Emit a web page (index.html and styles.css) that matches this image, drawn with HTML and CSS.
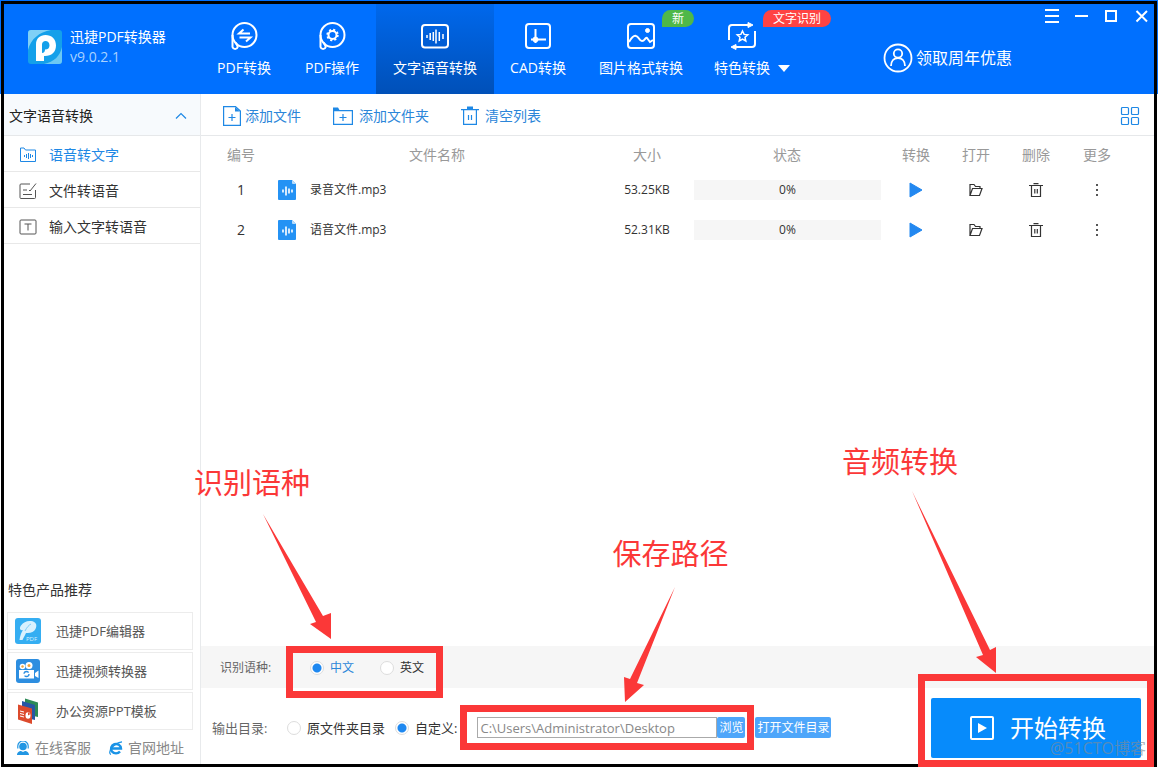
FILE: index.html
```html
<!DOCTYPE html>
<html lang="zh-CN">
<head>
<meta charset="utf-8">
<title>迅捷PDF转换器</title>
<link rel="stylesheet" href="styles.css">
</head>
<body>
<svg class="defs" aria-hidden="true">
  <symbol id="i-play" viewBox="0 0 14 16"><path d="M1 1l12 7-12 7z" fill="#2388f0" stroke="#2388f0" stroke-linejoin="round"/></symbol>
  <symbol id="i-open" viewBox="0 0 14 14"><path d="M1 12.500V1.500h4l1.500 2h4.500v2M1 12.500l2.500-7h9.500l-2.500 7z" fill="none" stroke="#333" stroke-width="1.200"/></symbol>
  <symbol id="i-trash" viewBox="0 0 14 14"><path d="M0 2.500h14M4.500 .6h5M2.500 2.500v11h9v-11M5.800 6v4.500M8.300 6v4.500" fill="none" stroke="#333" stroke-width="1.200"/></symbol>
  <symbol id="i-more" viewBox="0 0 4 14"><path d="M1 1h2v2H1zM1 6h2v2H1zM1 11h2v2H1z" fill="#555"/></symbol>
  <symbol id="i-audio" viewBox="0 0 18 20"><path d="M0 1q0-1 1-1h13l4 4v15q0 1-1 1H1q-1 0-1-1z" fill="#2492f4"/><path d="M14 0v3q0 1 1 1h3z" fill="#b9dcfb"/><path d="M5 9.500v3M8 6.500v9M11 8.500v5M14 9.500v3" stroke="#fff" stroke-width="1.600"/></symbol>
</svg>
<div class="page">
<div class="app">
  <header class="topbar">
    <div class="brand">
      <svg class="brand-logo" viewBox="0 0 34 34"><rect width="34" height="34" rx="3" fill="#14a0ea"/><path d="M0 20V3q0-3 3-3h20C11 2 3 9 0 20z" fill="#7fd0f6"/><path d="M34 17v14q0 3-3 3H16c10-2 16-8 18-17z" fill="#6cc8f3"/><path d="M8 31V14.500C8 8.500 12 5 17.500 5 23.500 5 28 9 28 15.500S23.500 26 17 26h-1v5z" fill="#fff"/><path d="M14 23v-8.500c0-2 1.500-3.500 3.500-3.500s4 1.500 4 4.200-1.500 4.300-4.500 4.300c0 2-1 3.500-3 3.500z" fill="#14a0ea"/></svg>
      <div class="brand-text"><div>迅捷PDF转换器</div><div class="version">v9.0.2.1</div></div>
    </div>
    <nav class="tabs">
      <a class="tab" href="#"><svg class="tab-icon" viewBox="0 0 28 28"><circle cx="14.500" cy="13" r="12"/><path d="M2.500 13v12a2.700 2.700 0 0 0 5.200 0c0-1.500-1-2.500-2-4.500"/><path d="M20 11.500H9l4.500-4M9.500 15.500h11L16 19.500"/></svg>PDF转换</a>
      <a class="tab" href="#"><svg class="tab-icon" viewBox="0 0 28 28"><circle cx="14.500" cy="13" r="12"/><path d="M2.500 13v12a2.700 2.700 0 0 0 5.200 0c0-1.500-1-2.500-2-4.500"/><circle cx="14.500" cy="13" r="4"/><circle class="teeth" cx="14.500" cy="13" r="5.300"/></svg>PDF操作</a>
      <a class="tab tab-wide tab-active" href="#"><svg class="tab-icon" viewBox="0 0 28 28"><rect x="1" y="3" width="26" height="22.500" rx="3"/><path class="thin" d="M6 13v3M9.200 11v7M12.300 10v9M15 7.500v14M18.300 10v9M22 12v5"/></svg>文字语音转换</a>
      <a class="tab" href="#"><svg class="tab-icon" viewBox="0 0 28 28"><rect x="2" y="2" width="24" height="24" rx="3"/><path d="M11.500 7v14M7 17.500h15"/><circle class="solid" cx="11.500" cy="17.500" r="2.500"/></svg>CAD转换</a>
      <a class="tab tab-wide" href="#"><svg class="tab-icon" viewBox="0 0 28 28"><rect x="1" y="2" width="26" height="24" rx="3"/><path d="M2 20q4-7 7-6c3 .5 3 5 6 5s3-4 5-3l3 4 3-2"/><circle class="solid" cx="20.500" cy="8.500" r="2"/></svg>图片格式转换<span class="badge badge-new">新</span></a>
      <a class="tab tab-more" href="#"><svg class="tab-icon" viewBox="0 0 28 28"><path d="M1 18V6q0-3 3-3h17M27 9v13q0 3-3 3H6"/><path class="solid" d="M20 0.500v5l5-2.500zM8 22.500v5l-5-2.500z"/><path class="thin" d="M14.500 9l1.600 3.400 3.700.4-2.800 2.500.8 3.700-3.300-1.900-3.300 1.900.8-3.700-2.800-2.500 3.700-.4z"/></svg><span class="tab-more-label">特色转换<svg class="caret" viewBox="0 0 12 7"><path d="M0 0h12L6 7z" fill="#fff"/></svg></span><span class="badge badge-ocr">文字识别</span></a>
    </nav>
    <a class="promo" href="#"><svg viewBox="0 0 30 30"><circle cx="15" cy="15" r="13.500"/><circle cx="15" cy="10.500" r="4.200"/><path d="M8 23c0-5 3-8 7-8s7 3 7 8"/></svg>领取周年优惠</a>
    <div class="window-controls">
      <button type="button" aria-label="菜单"><svg viewBox="0 0 14 14"><path d="M0 1h14M0 7h14M0 13h14"/></svg></button>
      <button type="button" aria-label="最小化"><svg viewBox="0 0 14 14"><path d="M0 7h13"/></svg></button>
      <button type="button" aria-label="最大化"><svg viewBox="0 0 14 14"><path d="M1 2h10v10H1z"/></svg></button>
      <button type="button" aria-label="关闭"><svg viewBox="0 0 14 14"><path d="M1.500 2L12 12.500M12 2L1.500 12.500"/></svg></button>
    </div>
  </header>
  <div class="body">
    <aside class="sidebar">
      <button class="side-head" type="button">文字语音转换<svg viewBox="0 0 12 8"><path d="M1 6.500L6 1.500l5 5" fill="none" stroke="#1e88e5" stroke-width="1.200"/></svg></button>
      <nav class="side-list">
        <a class="side-item side-item-active" href="#"><svg viewBox="0 0 18 16"><path d="M1.500 3V1H5l1.500 2h10v11.500h-15zM5.500 8v2M7.500 7v4M9.500 6v6M11.500 7v4M13.500 8v2"/></svg>语音转文字</a>
        <a class="side-item" href="#"><svg viewBox="0 0 18 16"><path d="M11 1H2q-1 0-1 1v12.500q0 1 1 1h13.500q1 0 1-1V7M4 7h4M4 11.500h9M10 7l1 1 6-7.500"/></svg>文件转语音</a>
        <a class="side-item" href="#"><svg viewBox="0 0 18 16"><rect x="1" y="1" width="16" height="14" rx="1"/><path d="M5.500 5h7M9 5v6.500"/></svg>输入文字转语音</a>
      </nav>
      <h2 class="side-title">特色产品推荐</h2>
      <div class="products">
        <a class="product" href="#"><svg viewBox="0 0 26 26"><rect width="26" height="26" rx="3" fill="#35aef2"/><path d="M4.500 22C5 18 6 15 8 12 5 13 4 10 6 7.500 8.500 4 12 2.500 16 3c5 .5 6.500 4 4.500 8-1.500 3-5 4.500-9.500 4-1 2-2.500 5-3.500 7z" fill="#d9f1fe"/><path d="M10 13c2-4 4-6 6-7" fill="none" stroke="#7fcbf6"/><text class="pdf-tag" x="11" y="23">PDF</text></svg>迅捷PDF编辑器</a>
        <a class="product" href="#"><svg viewBox="0 0 26 26"><rect x="1" y="1" width="24" height="24" rx="3" fill="#2d8ee0"/><circle cx="7.500" cy="8.500" r="2.800" fill="#fff"/><circle cx="14" cy="7.500" r="3.500" fill="#fff"/><circle cx="14" cy="7.500" r="1.500" fill="#f1a43a"/><circle cx="7.500" cy="8.500" r="1.200" fill="#f1a43a"/><path d="M4 12h15v8.500H4zM20 15l3.500-2.500v7.500L20 18z" fill="#fff"/><circle cx="11.500" cy="16" r="2.500" fill="none" stroke="#2d8ee0" stroke-width="1.300" stroke-dasharray="6 1.850"/></svg>迅捷视频转换器</a>
        <a class="product" href="#"><svg viewBox="0 0 26 26"><path d="M10 .5l13 4V19l-13-3z" fill="#2d8a57"/><path d="M7 3l13 4v15L7 19z" fill="#2856a5"/><path d="M3 6.500l14 4V26L3 21.500z" fill="#dc4a2c"/><path d="M5 13l4 1M5 15.500l4 1M5 18l4 1" stroke="#fff"/><ellipse cx="13" cy="17.500" rx="2.500" ry="3.200" fill="#fff"/><path d="M13 17.500v-3.200l2.500 1.800z" fill="#dc4a2c"/></svg>办公资源PPT模板</a>
      </div>
      <div class="side-links">
        <a href="#"><svg viewBox="0 0 14 14"><circle cx="7" cy="5.500" r="3.800" fill="#2196e3"/><path d="M1.800 7.500V5a5.200 5 0 0 1 10.400 0v2.500" fill="none" stroke="#2196e3" stroke-width="1.200"/><path d="M1 14c0-3 2.500-3.800 4-4l2 1 2-1c1.500.2 4 1 4 4z" fill="#2196e3"/></svg>在线客服</a>
        <a href="#"><svg viewBox="0 0 14 14"><path d="M2.500 7.500h9.500a5 4.700 0 1 0-1 3" fill="none" stroke="#1a93e6" stroke-width="2.400"/><path d="M2 13.500C-2 12 4 2 13 .8" fill="none" stroke="#1a93e6" stroke-width="1.200"/></svg>官网地址</a>
      </div>
    </aside>
    <main class="main">
      <div class="toolbar">
        <button class="tool" type="button"><svg class="ico-file" viewBox="0 0 18 20"><path d="M.6.600h11.900L17.400 5v14.400H.6zM9 8v7M5.500 11.500h7"/><path class="fill" d="M12 1v4.500h5z"/></svg>添加文件</button>
        <button class="tool tool-folder" type="button"><svg class="ico-folder" viewBox="0 0 20 18"><path d="M.6 3.600h18.800v13.800H.6zM10 7v7M6.500 10.500h7"/><path class="fill" d="M0 4V.5h5L7 4z"/></svg>添加文件夹</button>
        <button class="tool tool-clear" type="button"><svg class="ico-file" viewBox="0 0 18 20"><path d="M0 3.600h18M2.600 4v14.400h12.800V4M7.500 9v5M10.500 9v5"/><path class="fill" d="M6 .5h6v3H6z"/></svg>清空列表</button>
        <button class="tool tool-grid" type="button" aria-label="网格视图"><svg class="ico-grid" viewBox="0 0 20 20"><rect x="1.500" y="1.500" width="7" height="7" rx="1"/><rect x="11.500" y="1.500" width="7" height="7" rx="1"/><rect x="1.500" y="11.500" width="7" height="7" rx="1"/><rect x="11.500" y="11.500" width="7" height="7" rx="1"/></svg></button>
      </div>
      <div class="list">
        <table class="files">
          <colgroup><col class="c-no"><col><col class="c-size"><col class="c-status"><col class="c-act"><col class="c-act"><col class="c-act"><col class="c-more"></colgroup>
          <thead><tr><th class="no">编号</th><th>文件名称</th><th>大小</th><th>状态</th><th>转换</th><th>打开</th><th>删除</th><th>更多</th></tr></thead>
          <tbody>
            <tr><td class="no num">1</td><td><div class="file"><svg><use href="#i-audio"/></svg>录音文件.mp3</div></td><td>53.25KB</td><td><div class="bar">0%</div></td>
              <td><button type="button" aria-label="转换"><svg class="s-play"><use href="#i-play"/></svg></button></td><td><button type="button" aria-label="打开"><svg class="s-act"><use href="#i-open"/></svg></button></td><td><button type="button" aria-label="删除"><svg class="s-act"><use href="#i-trash"/></svg></button></td><td><button type="button" aria-label="更多"><svg class="s-more"><use href="#i-more"/></svg></button></td></tr>
            <tr><td class="no num">2</td><td><div class="file"><svg><use href="#i-audio"/></svg>语音文件.mp3</div></td><td>52.31KB</td><td><div class="bar">0%</div></td>
              <td><button type="button" aria-label="转换"><svg class="s-play"><use href="#i-play"/></svg></button></td><td><button type="button" aria-label="打开"><svg class="s-act"><use href="#i-open"/></svg></button></td><td><button type="button" aria-label="删除"><svg class="s-act"><use href="#i-trash"/></svg></button></td><td><button type="button" aria-label="更多"><svg class="s-more"><use href="#i-more"/></svg></button></td></tr>
          </tbody>
        </table>
      </div>
      <div class="lang-row">
        <span class="row-label">识别语种:</span>
        <div class="lang-options marked">
          <label class="radio"><input type="radio" name="lang" checked><span>中文</span></label>
          <label class="radio"><input type="radio" name="lang"><span>英文</span></label>
          <div class="frame frame-lang"></div>
          <div class="note note-lang">识别语种</div>
          <svg class="arrow arrow-lang" viewBox="0 0 68 125"><path d="M0 0L60 102l8-3v26L47 110l6-2z"/></svg>
        </div>
      </div>
      <div class="output-row">
        <span class="out-label">输出目录:</span>
        <label class="radio"><input type="radio" name="dir"><span>原文件夹目录</span></label>
        <label class="radio radio-custom"><input type="radio" name="dir" checked><span>自定义:</span></label>
        <div class="path marked">
          <input class="path-input" type="text" aria-label="输出路径" value="C:\Users\Administrator\Desktop"><button class="small-btn" type="button">浏览</button>
          <div class="frame frame-path"></div>
          <div class="note note-path">保存路径</div>
          <svg class="arrow arrow-path" viewBox="0 0 51 115"><path d="M51 0L13 96l7 2L1 115 0 90l6 2z"/></svg>
        </div>
        <button class="small-btn" type="button">打开文件目录</button>
        <div class="start-wrap marked">
          <button class="start" type="button"><svg viewBox="0 0 24 24"><rect x="1" y="1" width="22" height="22" rx="1" fill="none" stroke="#fff" stroke-width="2"/><path d="M8 7l9 5-9 5z" fill="#fff"/></svg>开始转换</button>
          <div class="frame frame-start"></div>
          <div class="note note-start">音频转换</div>
          <svg class="arrow arrow-start" viewBox="0 0 84 182"><path d="M0 0L78 159l6-3v26L64 166l7-2z"/></svg>
        </div>
      </div>
    </main>
  </div>
  <div class="watermark">@51CTO博客</div>
</div>
</div>
</body>
</html>
```
FILE: styles.css
```css
* { box-sizing: border-box; }
body {
  margin: 0;
  background: linear-gradient(#0070ff 94px, #fff 94px);
  font: 14px/20px "Open Sans", "Noto Sans CJK SC", sans-serif;
  color: #333;
}
a { color: inherit; text-decoration: none; }
button { font: inherit; color: inherit; background: none; border: 0; padding: 0; cursor: pointer; }
svg { display: block; flex: none; }
.defs { position: absolute; width: 0; height: 0; }
.page { min-height: 100vh; padding: 1px 1px 0; display: flex; }
.app { flex: 1; position: relative; display: flex; flex-direction: column; border: 3px solid #000; background: #fff; min-width: 0; }

.topbar { display: flex; height: 90px; background: #0070ff; color: #fff; }
.brand { display: flex; align-items: center; gap: 8px; width: 196px; padding-left: 24px; padding-bottom: 4px; }
.brand-logo { width: 34px; height: 34px; }
.version { color: #a8d2ff; }
.tabs { display: flex; }
.tab { position: relative; display: flex; flex-direction: column; align-items: center; gap: 8px; width: 88px; padding-top: 18px; white-space: nowrap; }
.tab-wide { width: 118px; }
.tab-active { background: linear-gradient(#0068ec, #0050b8); }
.tab-more { align-items: flex-start; width: 120px; padding-left: 14px; }
.tab-more .tab-icon { margin-left: 14px; }
.tab-more-label { display: flex; align-items: center; gap: 8px; }
.caret { width: 12px; height: 7px; }
.tab-icon { width: 28px; height: 28px; fill: none; stroke: #fff; stroke-width: 2; }
.tab-icon .solid { fill: #fff; stroke-width: 1; }
.tab-icon .thin { stroke-width: 1.5; }
.tab-icon .teeth { stroke-width: 1.8; stroke-dasharray: 2.1 2.062; }
.badge { position: absolute; top: 6px; height: 17px; border-radius: 9px 9px 9px 0; font-size: 12px; line-height: 17px; text-align: center; }
.badge-new { left: 80px; width: 32px; background: #4fb848; }
.badge-ocr { left: 63px; width: 68px; background: #ff4343; }
.promo { display: flex; align-items: center; gap: 3px; margin-left: auto; margin-right: 33px; padding-top: 18px; font-size: 16px; white-space: nowrap; }
.promo svg { width: 30px; height: 30px; fill: none; stroke: #fff; stroke-width: 1.8; }
.window-controls { display: flex; align-items: flex-start; gap: 16px; padding: 5px 5px 0 0; }
.window-controls svg { width: 14px; height: 14px; fill: none; stroke: #fff; stroke-width: 2; }

.body { flex: 1; display: flex; min-height: 0; }
.sidebar { width: 197px; flex: none; display: flex; flex-direction: column; border-right: 1px solid #e8eaec; }
.side-head { display: flex; align-items: center; justify-content: space-between; height: 42px; padding: 2px 13px 0 5px; background: #f7fafd; border-bottom: 1px solid #e6e8ea; color: #222; }
.side-head svg { width: 12px; height: 8px; }
.side-item { display: flex; align-items: center; gap: 12px; height: 36px; padding: 2px 0 0 15px; border-bottom: 1px solid #e8e8e8; }
.side-item svg { width: 18px; height: 16px; fill: none; stroke: #555; }
.side-item-active { color: #1e88e5; }
.side-item-active svg { stroke: #1e88e5; }
.side-title { margin: auto 0 12px 4px; font-size: 14px; font-weight: 400; }
.products { display: flex; flex-direction: column; gap: 2px; padding: 0 7px 0 3px; font-size: 13px; color: #555; }
.product { display: flex; align-items: center; gap: 15px; height: 38px; padding-left: 7px; border: 1px solid #ececec; }
.product svg { width: 26px; height: 26px; }
.pdf-tag { font-size: 6px; fill: #d9f1fe; }
.side-links { display: flex; gap: 18px; padding: 8px 0 6px 12px; color: #888; }
.side-links a { display: flex; align-items: center; gap: 5px; }
.side-links svg { width: 14px; height: 14px; }

.main { flex: 1; min-width: 0; display: flex; flex-direction: column; }
.toolbar { display: flex; align-items: center; gap: 32px; height: 42px; padding: 2px 14px 0 22px; border-bottom: 1px solid #e6e8ea; color: #2b86d9; }
.tool { display: flex; align-items: center; gap: 4px; }
.tool-folder, .tool-clear { gap: 6px; }
.tool svg { fill: none; stroke: #1e88e5; stroke-width: 1.2; }
.tool svg .fill { fill: #1e88e5; stroke: none; }
.ico-file { width: 18px; height: 20px; }
.ico-folder { width: 20px; height: 18px; }
.ico-grid { width: 20px; height: 20px; }
.tool-grid { margin-left: auto; }

.list { flex: 1; padding-right: 26px; }
.files { width: 100%; table-layout: fixed; border-collapse: collapse; font-size: 12px; text-align: center; }
.c-no { width: 67px; }
.c-size { width: 82px; }
.c-status { width: 198px; }
.c-act { width: 60px; }
.c-more { width: 62px; }
.files th, .files td { padding: 0; }
.files th { height: 34px; padding-top: 4px; font-size: 14px; font-weight: 400; color: #999; }
.files td { height: 40px; }
.files .no { padding-left: 13px; }
.files .num { font-size: 14px; }
.file { display: flex; align-items: center; gap: 14px; padding-left: 10px; }
.file svg { width: 18px; height: 20px; }
.bar { margin: 0 5px 0 6px; background: #f6f6f6; }
.files button { display: block; margin: 0 auto; }
.s-play { width: 14px; height: 16px; }
.s-act { width: 14px; height: 14px; }
.s-more { width: 4px; height: 14px; }

.lang-row { display: flex; align-items: center; height: 42px; padding-left: 19px; background: #f6f6f6; font-size: 12px; }
.row-label { width: 66px; padding-top: 2px; color: #666; }
.marked { position: relative; }
.lang-options { display: flex; align-items: center; gap: 26px; width: 157px; height: 42px; padding: 2px 0 0 24px; }
.radio { display: flex; align-items: center; gap: 6px; white-space: nowrap; }
.radio input { appearance: none; flex: none; width: 14px; height: 14px; margin: 0; border: 1px solid #ddd; border-radius: 50%; background: #fff; }
.radio input:checked { background: radial-gradient(circle, #1e88f0 4px, #fff 5px); }
.lang-options input:checked + span { color: #2b86d9; }

.output-row { display: flex; align-items: center; height: 76px; padding: 3px 0 0 11px; font-size: 13px; }
.out-label { width: 75px; color: #666; }
.radio-custom { margin-left: 10px; }
.path { display: flex; width: 294px; height: 45px; margin: 0 1px 0 3px; padding: 12px 9px 12px 17px; }
.path-input { flex: 1; min-width: 0; height: 21px; padding: 0 2px; border: 1px solid #aaa; color: #888; font: 13px/19px "Open Sans", "Noto Sans CJK SC", sans-serif; }
.small-btn { height: 21px; padding: 0 2px; border-radius: 2px; background: #4ea6fa; color: #fff; font-size: 12px; line-height: 21px; white-space: nowrap; }
.start-wrap { margin-left: auto; margin-right: 13px; }
.start { display: flex; align-items: center; justify-content: center; gap: 16px; width: 210px; height: 60px; padding-left: 4px; border-radius: 2px; background: #078bfb; color: #fff; font-size: 24px; }
.start svg { width: 24px; height: 24px; }

.frame { position: absolute; border: 7px solid #fb3838; pointer-events: none; }
.frame-lang { inset: 0 0 -10px; }
.frame-path { inset: 0; }
.frame-start { inset: -24px -13px -9px; }
.note { position: absolute; color: #fb3838; font-size: 29px; line-height: 30px; white-space: nowrap; pointer-events: none; }
.note-lang { left: -92px; top: -178px; }
.note-path { left: 152px; top: -166px; }
.note-start { left: -89px; top: -251px; }
.arrow { position: absolute; fill: #fb3838; pointer-events: none; }
.arrow-lang { left: -23px; top: -132px; width: 68px; height: 125px; }
.arrow-path { left: 164px; top: -118px; width: 51px; height: 115px; }
.arrow-start { left: -19px; top: -207px; width: 84px; height: 182px; }
.watermark { position: absolute; right: 8px; bottom: 6px; color: rgba(130, 140, 150, .65); font-size: 16px; pointer-events: none; }
```
